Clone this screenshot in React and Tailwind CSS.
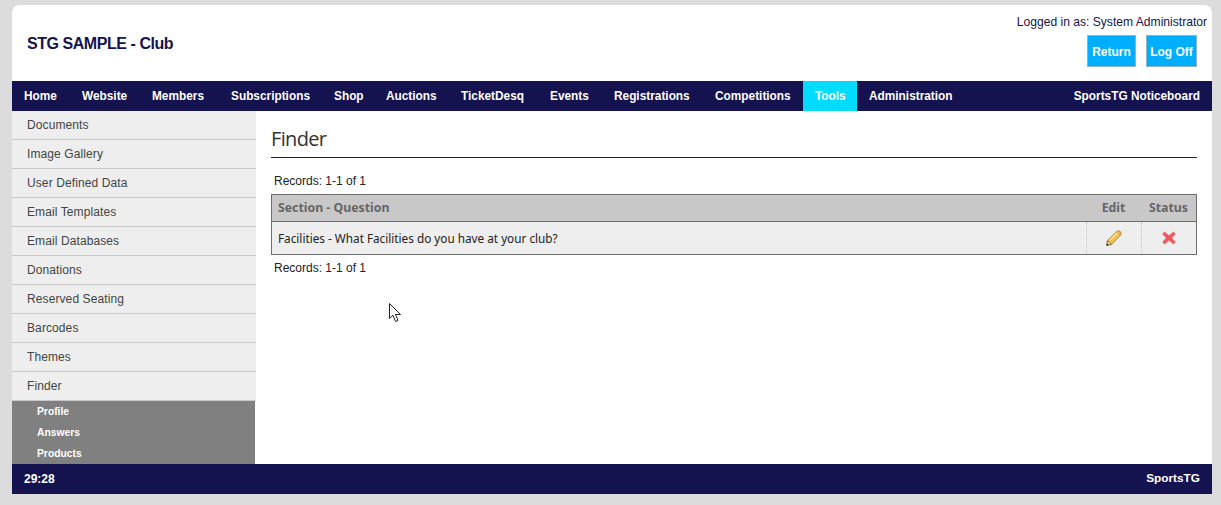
import React from 'react'

const navItems = [
  { label: 'Home', width: 'w-[58px]' },
  { label: 'Website', width: 'w-[70px]' },
  { label: 'Members', width: 'w-[79px]' },
  { label: 'Subscriptions', width: 'w-[103px]' },
  { label: 'Shop', width: 'w-[52px]' },
  { label: 'Auctions', width: 'w-[75px]' },
  { label: 'TicketDesq', width: 'w-[89px]' },
  { label: 'Events', width: 'w-[64px]' },
  { label: 'Registrations', width: 'w-[101px]' },
  { label: 'Competitions', width: 'w-[100px]' },
  { label: 'Tools', width: 'w-[54px]' },
  { label: 'Administration', width: 'w-[110px]' },
]
const sideItems = ['Documents', 'Image Gallery', 'User Defined Data', 'Email Templates', 'Email Databases', 'Donations', 'Reserved Seating', 'Barcodes', 'Themes', 'Finder']
const subItems = ['Profile', 'Answers', 'Products']

function Pencil() {
  return (
    <svg width="16" height="16" viewBox="0 0 16 16">
      <path d="M0.6 15.4 L1.6 10.4 L10.8 1.4 Q12.6 0.2 14.4 1.6 Q15.9 3.4 14.5 5.2 L5.6 14.4 Z" fill="#f2c14a" stroke="#a97c2c" strokeWidth="0.8" />
      <path d="M0.6 15.4 L1.6 10.4 L5.6 14.4 Z" fill="#eed9a8" stroke="#6d5428" strokeWidth="0.7" />
      <path d="M0.6 15.4 L1 13.2 L2.8 15 Z" fill="#3d3020" />
      <path d="M3.4 10.6 L11.6 2.8" stroke="#fbe69a" strokeWidth="1.4" />
      <path d="M11 1.8 L14.4 5" stroke="#d99a45" strokeWidth="1" />
    </svg>
  )
}

function Cross() {
  return (
    <svg width="14" height="14" viewBox="0 0 14 14">
      <path d="M2.6 0.8 L7 4.4 L11.4 0.8 L13.6 3 L9.8 7 L13.6 11 L11.4 13.2 L7 9.6 L2.6 13.2 L0.4 11 L4.2 7 L0.4 3 Z" fill="#ea5a60" stroke="#f08a8e" strokeWidth="0.5" />
    </svg>
  )
}

function Cursor() {
  return (
    <svg className="absolute left-[389px] top-[303px]" width="13" height="20" viewBox="0 0 13 20">
      <path d="M0.5 0.5 L0.5 15.5 L4 12.3 L6.5 18.5 L9 17.5 L6.5 11.5 L11.5 11.5 Z" fill="#fff" stroke="#222" strokeWidth="1" />
    </svg>
  )
}

export default function App() {
  return (
    <div className="relative h-[505px] w-[1221px] overflow-hidden bg-[#dcdcdc] pt-[5px] pl-[12px] font-['Liberation_Sans',Arial,sans-serif]">
      <div className="flex h-[489px] w-[1200px] flex-col overflow-hidden rounded-t-[8px] bg-white">
        {/* Header */}
        <div className="flex h-[76px] shrink-0 justify-between">
          <div className="pl-[15px] pt-[29px] text-[16px] leading-[19px] tracking-[-0.45px] font-bold text-[#15134f]">STG SAMPLE - Club</div>
          <div className="flex flex-col items-end pr-[5px] pt-[10px]">
            <div className="text-[12.1px] leading-[15px] text-[#15134f]">Logged in as: System Administrator</div>
            <div className="mt-[5px] mr-[10px] flex gap-[10px]">
              <button className="h-[32px] w-[49px] border border-[#8fb4c9] bg-[#00aeff] pt-[1px] text-[12px] font-bold text-white">Return</button>
              <button className="h-[32px] w-[51px] border border-[#8fb4c9] bg-[#00aeff] pt-[1px] text-[12px] font-bold text-white">Log Off</button>
            </div>
          </div>
        </div>

        {/* Main nav */}
        <div className="flex h-[30px] shrink-0 items-stretch justify-between bg-[#15134f] text-[11.85px] font-bold text-white">
          <div className="flex">
            {navItems.map((item) => (
              <div key={item.label} className={`flex items-center pl-[12px] pt-[1px] ${item.width} ${item.label === 'Tools' ? 'bg-[#00dcff]' : ''}`}>{item.label}</div>
            ))}
          </div>
          <div className="flex items-center pr-[12px] pt-[1px]">SportsTG Noticeboard</div>
        </div>

        <div className="flex min-h-0 flex-1">
          {/* Sidebar */}
          <div className="w-[244px] shrink-0 overflow-hidden">
            {sideItems.map((item) => (
              <div key={item} className="h-[29px] border-b border-[#c8c8c8] bg-[#eeeeee] pl-[15px] pt-[7px] text-[12px] leading-[15px] tracking-[0.1px] text-[#444444]">{item}</div>
            ))}
            <div className="mr-[1px] bg-[#808080]">
              {subItems.map((item) => (
                <div key={item} className="h-[21px] pl-[25px] text-[10.3px] leading-[21px] font-bold text-white">{item}</div>
              ))}
            </div>
          </div>

          {/* Content */}
          <div className="flex-1 pl-[15px] pr-[15px]">
            <h1 className="mt-[14px] h-[33px] border-b border-[#222222] text-[20px] leading-[27px] tracking-[-0.65px] text-[#333333] font-['Open_Sans',sans-serif]">Finder</h1>
            <div className="mt-[16px] pl-[3px] text-[12px] leading-[15px] text-[#222222]">Records: 1-1 of 1</div>
            <div className="mt-[5px] border border-[#6e6e6e] font-['Noto_Sans',sans-serif]">
              <div className="flex h-[27px] items-center border-b border-[#6e6e6e] bg-[#c8c8c8] pt-[1px] text-[12.3px] font-bold text-[#666666]">
                <div className="flex-1 pl-[6px]">Section - Question</div>
                <div className="w-[55px] text-center">Edit</div>
                <div className="w-[55px] text-center">Status</div>
              </div>
              <div className="flex h-[32px] items-stretch bg-[#eeeeee] text-[11.75px] text-[#222222]">
                <div className="flex-1 pl-[6px] leading-[32px]">Facilities - What Facilities do you have at your club?</div>
                <div className="flex w-[55px] items-center justify-center border-l border-dotted border-[#c4c4c4]"><Pencil /></div>
                <div className="flex w-[55px] items-center justify-center border-l border-dotted border-[#c4c4c4]"><Cross /></div>
              </div>
            </div>
            <div className="mt-[6px] pl-[3px] text-[12px] leading-[15px] text-[#222222]">Records: 1-1 of 1</div>
          </div>
        </div>

        {/* Footer */}
        <div className="flex h-[30px] shrink-0 items-center justify-between bg-[#15134f] px-[12px] text-[12px] font-bold text-white">
          <span>29:28</span>
          <span className="text-[11.8px]">SportsTG</span>
        </div>
      </div>
      <Cursor />
    </div>
  )
}
